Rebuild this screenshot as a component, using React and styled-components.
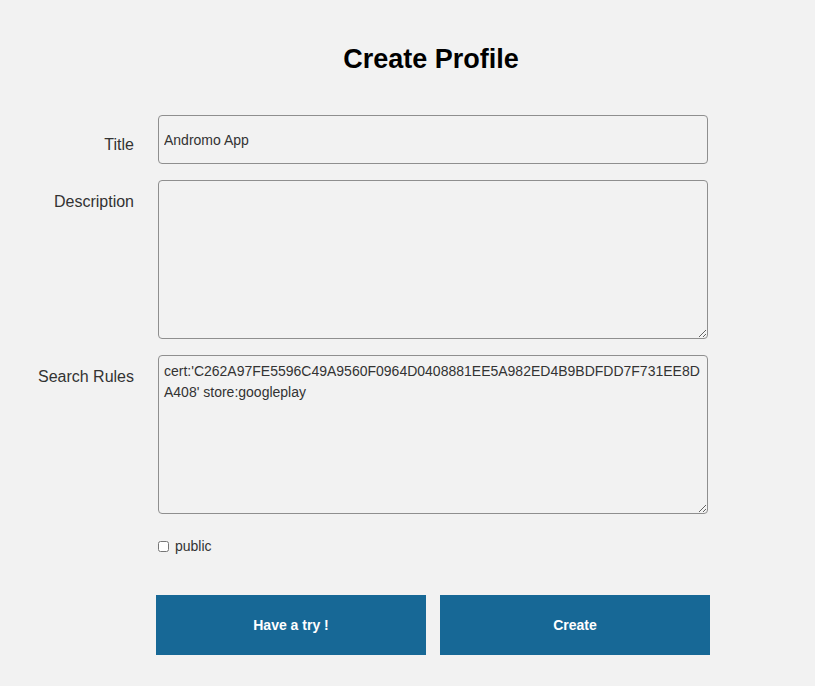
import React from 'react'
import styled, { createGlobalStyle } from 'styled-components'

const GlobalStyle = createGlobalStyle`
  body {
    margin: 0;
    background: #f2f2f2;
    font-family: "Liberation Sans", Arial, sans-serif;
    color: #333;
  }
`

const Form = styled.form`
  display: grid;
  grid-template-columns: 134px 550px;
  column-gap: 24px;
  row-gap: 16px;
  padding-top: 43px;
`

const Heading = styled.h1`
  grid-column: 2;
  margin: 0 4px 24px 0;
  font-size: 27px;
  line-height: 32px;
  font-weight: bold;
  color: #000;
  text-align: center;
`

const Label = styled.label`
  grid-column: 1;
  text-align: right;
  font-size: 16px;
  line-height: 18px;
  color: #333;
  padding-top: ${(p) => p.$offset}px;
`

const Input = styled.input`
  grid-column: 2;
  box-sizing: border-box;
  width: 550px;
  height: 49px;
  margin: 0;
  padding: 0 5px;
  border: 1px solid #8f8f8f;
  border-radius: 4px;
  background: transparent;
  font-family: "Liberation Sans", Arial, sans-serif;
  font-size: 14px;
  color: #333;
  outline: none;
`

const TextArea = styled.textarea`
  grid-column: 2;
  box-sizing: border-box;
  width: 550px;
  height: 159px;
  margin: 0;
  padding: 5px 5px;
  border: 1px solid #8f8f8f;
  border-radius: 4px;
  background: transparent;
  font-family: "Liberation Sans", Arial, sans-serif;
  font-size: 14px;
  line-height: 21px;
  color: #333;
  outline: none;
`

const CheckRow = styled.div`
  grid-column: 2;
  display: flex;
  align-items: center;
  gap: 6px;
  margin-top: 8px;
  font-size: 14px;
  color: #333;
`

const Check = styled.input`
  margin: 0;
  width: 11px;
  height: 11px;
`

const Buttons = styled.div`
  grid-column: 2;
  display: grid;
  grid-template-columns: 1fr 1fr;
  gap: 14px;
  margin: 25px -2px 0;
`

const Button = styled.button`
  height: 60px;
  border: none;
  background: #176896;
  color: #fff;
  font-family: "Liberation Sans", Arial, sans-serif;
  font-size: 14px;
  font-weight: bold;
  cursor: pointer;
`

const rules =
  "cert:'C262A97FE5596C49A9560F0964D0408881EE5A982ED4B9BDFDD7F731EE8DA408' store:googleplay"

function App() {
  return (
    <>
      <GlobalStyle />
      <Form onSubmit={(e) => e.preventDefault()}>
        <Heading>Create Profile</Heading>
        <Label $offset={21}>Title</Label>
        <Input defaultValue="Andromo App" />
        <Label $offset={13}>Description</Label>
        <TextArea />
        <Label $offset={13}>Search Rules</Label>
        <TextArea defaultValue={rules} />
        <CheckRow>
          <Check type="checkbox" />
          public
        </CheckRow>
        <Buttons>
          <Button type="button">Have a try !</Button>
          <Button type="submit">Create</Button>
        </Buttons>
      </Form>
    </>
  )
}

export default App
